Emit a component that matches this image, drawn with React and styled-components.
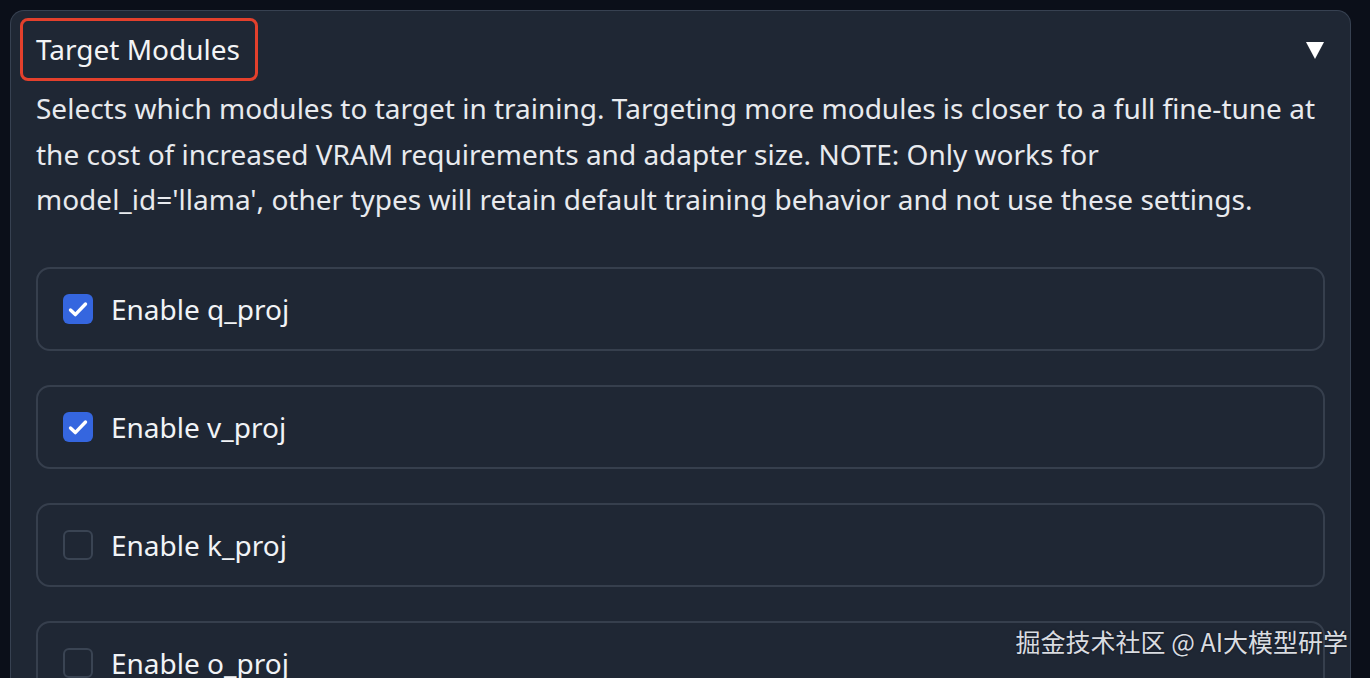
import React from "react";
import styled, { createGlobalStyle } from "styled-components";

const Global = createGlobalStyle`
  html, body {
    margin: 0;
    padding: 0;
    background: #0b0f19;
    font-family: "Noto Sans", "Open Sans", sans-serif;
    color: #f3f4f6;
    overflow: hidden;
  }
`;

const Page = styled.div`
  position: relative;
  height: 678px;
  padding: 10px 19px 0 10px;
  box-sizing: border-box;
`;

const Panel = styled.div`
  background: #1f2734;
  border: 1.5px solid #374151;
  border-bottom: none;
  border-radius: 14px 14px 0 0;
  padding: 7px 25px 0 25px;
  height: 100%;
  box-sizing: border-box;
`;

const Header = styled.div`
  display: flex;
  justify-content: space-between;
  align-items: center;
`;

const Title = styled.span`
  font-size: 28px;
  line-height: 38px;
  padding: 9px 15px 10px 13px;
  margin-left: -16px;
  border: 3px solid #e3402c;
  border-radius: 8px;
`;

const Caret = styled.svg`
  margin-right: 1px;
`;

const Info = styled.p`
  margin: 5px 0 44px 0;
  font-size: 28px;
  line-height: 45.5px;
  color: #e8eaee;
  white-space: nowrap;
`;

const List = styled.div`
  display: flex;
  flex-direction: column;
  gap: 34px;
`;

const Row = styled.label`
  display: flex;
  align-items: center;
  gap: 18px;
  height: 84px;
  padding: 0 25px;
  border: 2px solid #363f4d;
  border-radius: 14px;
  box-sizing: border-box;
  font-size: 28px;
  color: #f1f3f6;
`;

const Box = styled.span`
  width: 30px;
  height: 30px;
  flex: none;
  border-radius: 6px;
  box-sizing: border-box;
  display: flex;
  align-items: center;
  justify-content: center;
  background: ${(p) => (p.$on ? "#3566df" : "transparent")};
  border: ${(p) => (p.$on ? "none" : "2px solid #3a4453")};
`;

const Watermark = styled.div`
  position: absolute;
  right: 22px;
  bottom: 19px;
  font-family: "Noto Sans CJK SC", sans-serif;
  font-size: 25px;
  color: #d9dce1;
  text-shadow: 0 0 2px rgba(0, 0, 0, 0.6);
`;

const items = [
  { name: "q_proj", on: true },
  { name: "v_proj", on: true },
  { name: "k_proj", on: false },
  { name: "o_proj", on: false },
];

export default function App() {
  return (
    <Page>
      <Global />
      <Panel>
        <Header>
          <Title>Target Modules</Title>
          <Caret width="18" height="18" viewBox="0 0 18 18">
            <polygon points="0,1 18,1 9,18" fill="#ffffff" />
          </Caret>
        </Header>
        <Info>
          Selects which modules to target in training. Targeting more modules is closer to a full fine-tune at
          <br />
          the cost of increased VRAM requirements and adapter size. NOTE: Only works for
          <br />
          model_id='llama', other types will retain default training behavior and not use these settings.
        </Info>
        <List>
          {items.map((it) => (
            <Row key={it.name}>
              <Box $on={it.on}>
                {it.on && (
                  <svg width="30" height="30" viewBox="0 0 30 30">
                    <path d="M7.5 16l4.8 4.6L22.5 10" fill="none" stroke="#fff" strokeWidth="3.4" strokeLinecap="round" strokeLinejoin="round" />
                  </svg>
                )}
              </Box>
              Enable {it.name}
            </Row>
          ))}
        </List>
      </Panel>
      <Watermark>掘金技术社区 @ AI大模型研学</Watermark>
    </Page>
  );
}
